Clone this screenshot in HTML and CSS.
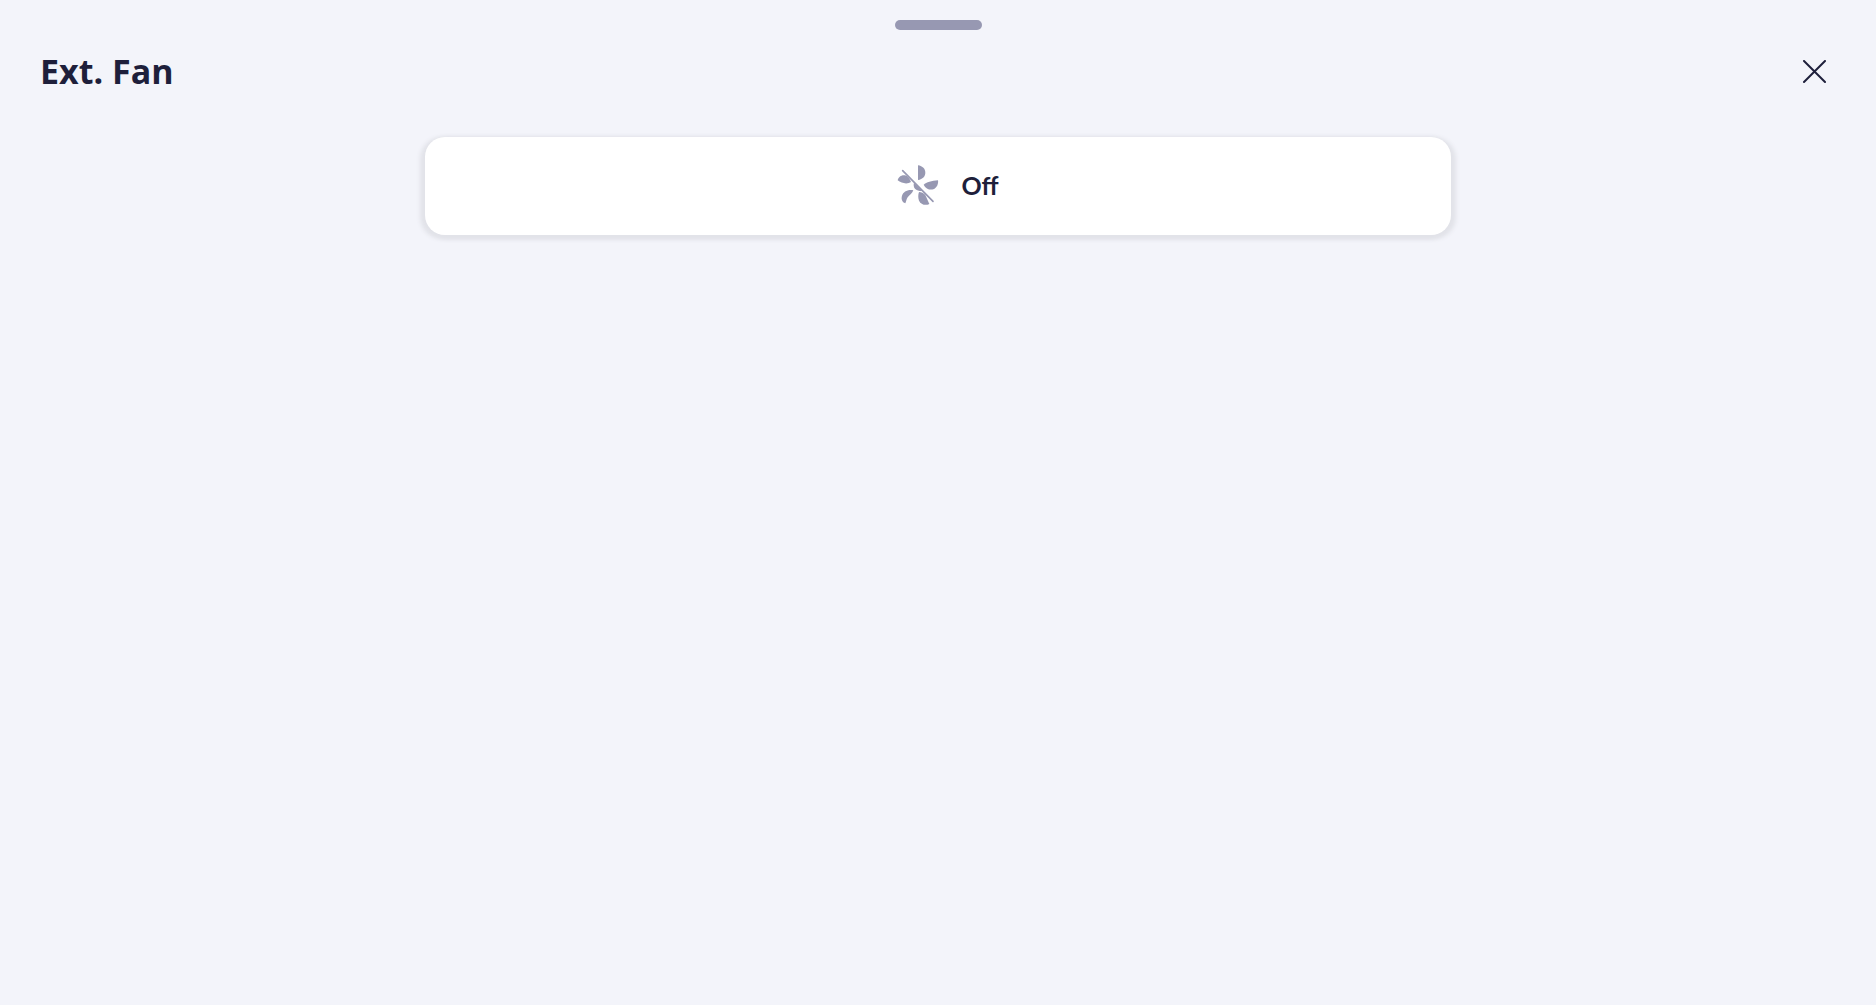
FILE: index.html
```html
<!DOCTYPE html>
<html lang="en">
<head>
    <meta charset="UTF-8">
    <meta name="viewport" content="width=device-width, initial-scale=1.0">
    <title>Ext. Fan</title>
    <link rel="stylesheet" href="styles.css">
</head>
<body>
    <div class="handle"></div>

    <header class="sheet-header">
        <h1>Ext. Fan</h1>
        <button class="close-btn" type="button" aria-label="Close">
            <svg viewBox="0 0 24 24" width="24" height="24">
                <path d="M2 1L23 22M23 1L2 22"/>
            </svg>
        </button>
    </header>

    <main>
        <button class="fan-btn" type="button">
            <svg class="fan-icon" viewBox="0 0 150 150" width="50" height="50">
                <!-- blades -->
                <path d="M75 16C89 18 97 27 97 38C97 49 89 57 75 60Z"/>
                <path d="M92 74C100 67 116 62 135 61C137 72 131 84 121 88C110 91 98 86 92 74Z"/>
                <path d="M78 96C85 96 92 99 97 105L109 132C97 138 83 133 78 122C75 113 75 104 78 96Z"/>
                <path d="M61 91C58 99 50 105 44 112C40 118 40 124 37 130C27 126 24 117 27 107C31 96 43 88 61 91Z"/>
                <path d="M14 61C16 51 25 44 36 46C44 48 50 56 54 66C44 73 26 71 14 61Z"/>
                <!-- hub -->
                <path d="M63 68L88 93C78 93 70 91 66 86C62 81 61 75 63 68Z"/>
                <path class="slash" d="M29 32L120 124"/>
            </svg>
            <span>Off</span>
        </button>
    </main>
</body>
</html>
```
FILE: styles.css
```css
body {
    margin: 0;
    padding: 20px 40px;
    font-family: Lato, "Liberation Sans", sans-serif;
    background-color: #f3f4fa;
    color: #1e1f3b;
}

.handle {
    width: 87px;
    height: 10px;
    margin: 0 auto;
    border-radius: 5px;
    background-color: #9798b2;
}

.sheet-header {
    display: flex;
    justify-content: space-between;
    align-items: center;
    margin-top: 20px;
}

.sheet-header h1 {
    margin: 0;
    font-family: "Open Sans", "Noto Sans", sans-serif;
    font-size: 34px;
    line-height: 42px;
    padding-bottom: 2px;
    font-weight: 700;
}

.close-btn {
    display: flex;
    padding: 10px;
    border: none;
    background: none;
    cursor: pointer;
}

.close-btn svg {
    fill: none;
    stroke: #1e1f3b;
    stroke-width: 2;
    stroke-linecap: round;
}

main {
    max-width: 1026px;
    margin: 43px auto 0;
}

.fan-btn {
    display: flex;
    justify-content: center;
    align-items: center;
    gap: 18px;
    width: 100%;
    padding: 23px 24px 25px 40px;
    border: none;
    border-radius: 20px;
    background-color: #fff;
    box-shadow: 3px 2px 4px 2px #e2e3e9, -3px 2px 4px 2px #e2e3e9;
    font-family: inherit;
    font-size: 25px;
    font-weight: 700;
    color: #1e1f3b;
    cursor: pointer;
}

.fan-icon {
    fill: #9798b2;
}

.fan-icon .slash {
    fill: none;
    stroke: #9798b2;
    stroke-width: 5;
    stroke-linecap: round;
}
```
